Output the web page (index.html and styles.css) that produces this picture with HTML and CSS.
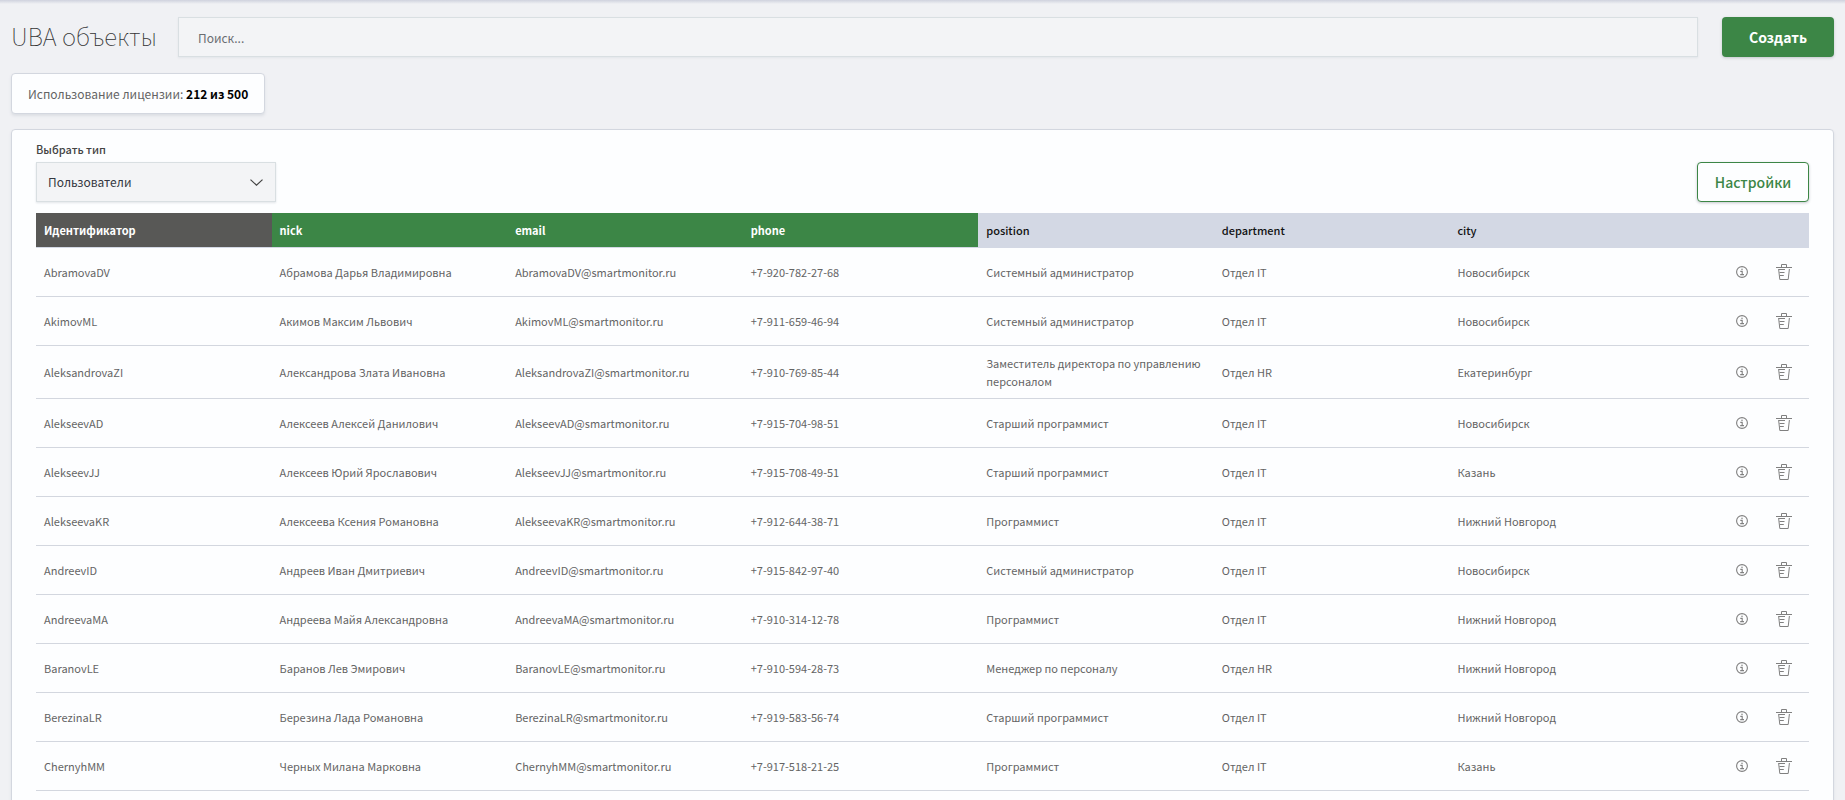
FILE: index.html
```html
<!DOCTYPE html>
<html lang="ru">
<head>
<meta charset="utf-8">
<title>UBA объекты</title>
<link rel="stylesheet" href="styles.css">
</head>
<body>
<svg class="sprite" aria-hidden="true">
  <symbol id="info" viewBox="0 0 12 12">
    <circle cx="6" cy="6" r="5.4" fill="none" stroke="currentColor" stroke-width="1.1"/>
    <path d="M5.2 3.2h1.6M4.3 5.4h1.9v3M4.2 8.6h3.8" fill="none" stroke="currentColor" stroke-width="1.1"/>
  </symbol>
  <symbol id="trash" viewBox="0 0 16 16">
    <path d="M0 3.5h16M5.5 3V.5h5V3M2.6 5l1.2 10.5h8.4L13.4 5M3 5.5h6M3.5 8.5h5M3.8 11.5h4" fill="none" stroke="currentColor"/>
  </symbol>
</svg>
<header class="topbar">
  <h1 class="title">UBA объекты</h1>
  <input class="search" type="search" placeholder="Поиск..." aria-label="Поиск">
  <button class="btn btn-primary" type="button">Создать</button>
</header>
<main>
  <p class="license">Использование лицензии: <strong>212 из 500</strong></p>
  <section class="panel">
    <div class="toolbar">
      <div class="field">
        <label class="label" for="type">Выбрать тип</label>
        <div class="select-wrap">
          <select class="select" id="type"><option>Пользователи</option></select>
          <svg class="chevron" viewBox="0 0 13 7" aria-hidden="true"><path d="M.5.6L6.5 6.2 12.5.6" fill="none" stroke="currentColor" stroke-width="1.2"/></svg>
        </div>
      </div>
      <button class="btn btn-outline" type="button">Настройки</button>
    </div>
    <table class="table">
      <thead>
        <tr><th class="id">Идентификатор</th><th class="key">nick</th><th class="key">email</th><th class="key">phone</th><th>position</th><th>department</th><th>city</th><th class="actions-col" aria-label="Действия"></th></tr>
      </thead>
      <tbody id="rows"></tbody>
    </table>
  </section>
</main>
<script src="app.js"></script>
</body>
</html>
```
FILE: styles.css
```css
* { box-sizing: border-box; }
body {
  margin: 0;
  padding: 17px 11px 0;
  background: #f0f1f4 linear-gradient(#cfd2de, #f0f1f4) 0 0 / 100% 4px no-repeat;
  color: #646464;
  font: 11px/18px "Noto Sans CJK SC", "Noto Sans", sans-serif;
}
button, input, select { font-family: inherit; }
.sprite { position: absolute; width: 0; height: 0; }
.topbar { display: flex; align-items: center; gap: 24px; margin-bottom: 16px; }
.title { width: 143px; margin: 0; padding-bottom: 2px; font-size: 24px; line-height: 38px; font-weight: 100; color: #343434; white-space: nowrap; }
.search {
  flex: 1;
  min-width: 0;
  height: 40px;
  padding: 0 19px;
  border: 1px solid #d9dfe2;
  border-radius: 0;
  background: #f3f4f6;
  box-shadow: 0 1px 2px #e2e5e9;
  color: #343741;
  font-size: 12px;
  appearance: none;
}
.search::placeholder { color: #6a6d72; opacity: 1; }
.btn { width: 112px; height: 40px; padding: 0 0 1px; border-radius: 4px; font-size: 14px; box-shadow: 0 1px 3px #c3c6cc; }
.btn-primary { border: 0; background: #3c8646; color: #fff; font-weight: 700; }
.btn-outline { border: 1px solid #3c8646; background: #fdfeff; color: #3c8646; font-weight: 500; }
.license {
  width: fit-content;
  margin: 0 0 15px;
  padding: 10px 16px 9px;
  border: 1px solid #d3d7df;
  border-radius: 4px;
  background: #fdfeff;
  box-shadow: 0 2px 3px #dcdfe4;
  font-size: 12px;
  line-height: 20px;
}
.license strong { color: #000; }
.panel {
  padding: 10px 24px 24px;
  border: 1px solid #d3d7df;
  border-radius: 4px;
  background: #fdfeff;
  box-shadow: 0 2px 3px #dcdfe4;
}
.toolbar { display: flex; align-items: flex-end; justify-content: space-between; margin-bottom: 11px; }
.label { display: block; margin-bottom: 4px; font-weight: 500; color: #444; }
.select-wrap { position: relative; width: 240px; }
.select {
  display: block;
  width: 100%;
  height: 40px;
  padding: 0 11px 2px;
  border: 1px solid #d9dfe2;
  border-radius: 0;
  background: #f3f4f6;
  box-shadow: 0 1px 2px #e2e5e9;
  color: #343741;
  font-size: 12px;
  appearance: none;
}
.chevron { position: absolute; right: 13px; top: 17px; width: 13px; height: 7px; color: #444; pointer-events: none; }
.table { width: 100%; border-collapse: separate; border-spacing: 0; table-layout: fixed; }
.table th { height: 35px; padding: 0 8px; border-bottom: 1px solid #d3d8e4; background: #d3d8e4; background-clip: padding-box; color: #111; font-weight: 500; text-align: left; }
.table .id { background-color: #585856; color: #fff; font-weight: 700; }
.table .key { background-color: #3c8646; color: #fff; font-weight: 700; }
.actions-col { width: 124px; }
.table td { padding: 8px; border-bottom: 1px solid #d3d7df; }
.actions { display: flex; justify-content: flex-end; gap: 8px; }
.icon-btn { display: grid; place-items: center; width: 34px; height: 32px; padding: 0; border: 0; background: none; color: #808080; }
.icon-info { width: 12px; height: 12px; }
.icon-trash { width: 16px; height: 16px; }
```
FILE: app.js
```js
const users = [
  ["AbramovaDV", "Абрамова Дарья Владимировна", "+7-920-782-27-68", "Системный администратор", "Отдел IT", "Новосибирск"],
  ["AkimovML", "Акимов Максим Львович", "+7-911-659-46-94", "Системный администратор", "Отдел IT", "Новосибирск"],
  ["AleksandrovaZI", "Александрова Злата Ивановна", "+7-910-769-85-44", "Заместитель директора по управлению персоналом", "Отдел HR", "Екатеринбург"],
  ["AlekseevAD", "Алексеев Алексей Данилович", "+7-915-704-98-51", "Старший программист", "Отдел IT", "Новосибирск"],
  ["AlekseevJJ", "Алексеев Юрий Ярославович", "+7-915-708-49-51", "Старший программист", "Отдел IT", "Казань"],
  ["AlekseevaKR", "Алексеева Ксения Романовна", "+7-912-644-38-71", "Программист", "Отдел IT", "Нижний Новгород"],
  ["AndreevID", "Андреев Иван Дмитриевич", "+7-915-842-97-40", "Системный администратор", "Отдел IT", "Новосибирск"],
  ["AndreevaMA", "Андреева Майя Александровна", "+7-910-314-12-78", "Программист", "Отдел IT", "Нижний Новгород"],
  ["BaranovLE", "Баранов Лев Эмирович", "+7-910-594-28-73", "Менеджер по персоналу", "Отдел HR", "Нижний Новгород"],
  ["BerezinaLR", "Березина Лада Романовна", "+7-919-583-56-74", "Старший программист", "Отдел IT", "Нижний Новгород"],
  ["ChernyhMM", "Черных Милана Марковна", "+7-917-518-21-25", "Программист", "Отдел IT", "Казань"]
];
const actions = `<td><div class="actions">
  <button class="icon-btn" type="button" aria-label="Информация"><svg class="icon-info"><use href="#info"/></svg></button>
  <button class="icon-btn" type="button" aria-label="Удалить"><svg class="icon-trash"><use href="#trash"/></svg></button>
</div></td>`;
document.getElementById("rows").innerHTML = users.map(([id, nick, ...rest]) =>
  "<tr>" + [id, nick, id + "@smartmonitor.ru", ...rest].map(v => `<td>${v}</td>`).join("") + actions + "</tr>"
).join("");
```
